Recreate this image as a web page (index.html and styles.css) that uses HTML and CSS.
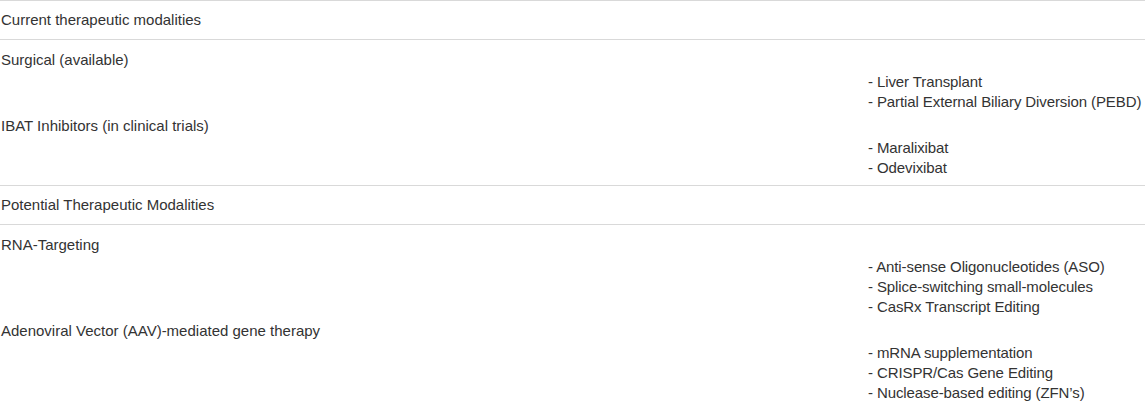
FILE: index.html
```html
<!DOCTYPE html>
<html lang="en">
<head>
<meta charset="utf-8">
<title>Therapeutic modalities</title>
<link rel="stylesheet" href="styles.css">
</head>
<body>
<div class="table">
  <div class="head-row">Current therapeutic modalities</div>
  <div class="section">
    <div class="group">
      <div class="label">Surgical (available)</div>
      <ul class="items">
        <li>- Liver Transplant</li>
        <li>- Partial External Biliary Diversion (PEBD)</li>
      </ul>
    </div>
    <div class="group">
      <div class="label">IBAT Inhibitors (in clinical trials)</div>
      <ul class="items">
        <li>- Maralixibat</li>
        <li>- Odevixibat</li>
      </ul>
    </div>
  </div>
  <div class="head-row">Potential Therapeutic Modalities</div>
  <div class="section">
    <div class="group">
      <div class="label">RNA-Targeting</div>
      <ul class="items">
        <li>- Anti-sense Oligonucleotides (ASO)</li>
        <li>- Splice-switching small-molecules</li>
        <li>- CasRx Transcript Editing</li>
      </ul>
    </div>
    <div class="group">
      <div class="label">Adenoviral Vector (AAV)-mediated gene therapy</div>
      <ul class="items">
        <li>- mRNA supplementation</li>
        <li>- CRISPR/Cas Gene Editing</li>
        <li>- Nuclease-based editing (ZFN’s)</li>
      </ul>
    </div>
  </div>
</div>
</body>
</html>
```
FILE: styles.css
```css
html, body {
  margin: 0;
  padding: 0;
  background: #ffffff;
  overflow: hidden;
}

body {
  font-family: "Liberation Sans", Arial, sans-serif;
  font-size: 15px;
  line-height: 20px;
  color: #333333;
}

.table {
  display: flex;
  flex-direction: column;
}

.head-row {
  border-top: 1px solid #d9d9d9;
  padding: 9px 0 9px 1px;
}

.section {
  border-top: 1px solid #d9d9d9;
  padding: 10px 0 7px 0;
  display: flex;
  flex-direction: column;
  gap: 4px;
}

.group {
  display: grid;
  grid-template-columns: 868px 1fr;
}

.label {
  padding-left: 1px;
}

.items {
  list-style: none;
  margin: 0;
  padding: 22px 0 0 0;
  white-space: nowrap;
  letter-spacing: -0.1px;
}
```
